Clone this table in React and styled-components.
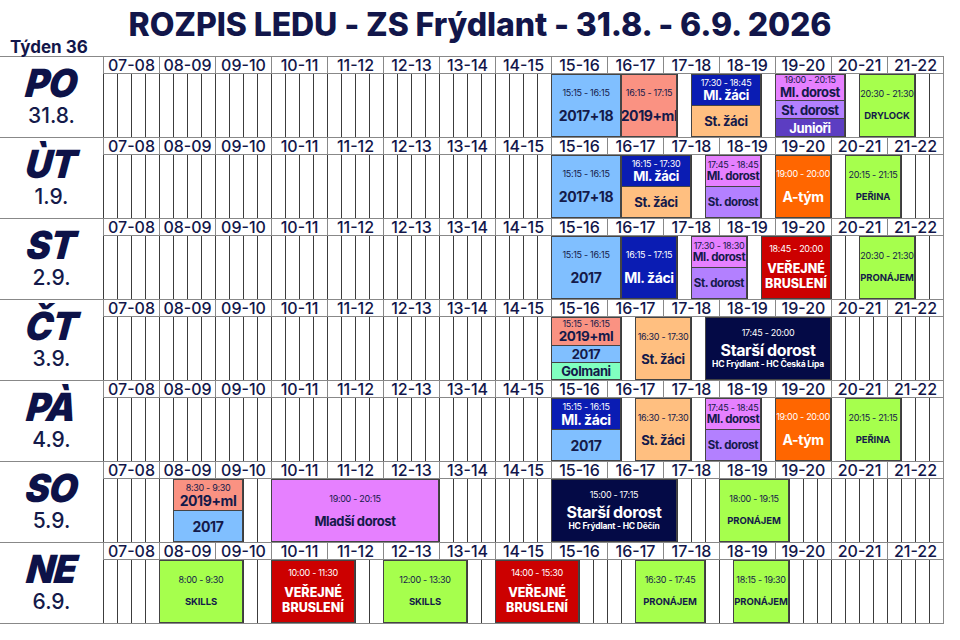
import React from 'react';
import styled, { createGlobalStyle } from 'styled-components';

const GlobalStyle = createGlobalStyle`
  * { box-sizing: border-box; }
  body {
    margin: 0;
    background: #ffffff;
    font-family: Inter, "Noto Sans", sans-serif;
    color: #141a4a;
  }
`;

const Page = styled.div`
  width: 960px;
  height: 640px;
  overflow: hidden;
`;

const Header = styled.header`
  display: flex;
  flex-direction: column;
  height: 56px;
`;

const Title = styled.h1`
  margin: 0;
  padding-top: 6px;
  line-height: 38px;
  font-size: 32px;
  font-weight: 800;
  text-align: center;
  color: #12164a;
  letter-spacing: -0.1px;
`;

const Week = styled.div`
  margin-top: -6px;
  padding-left: 10px;
  line-height: 18px;
  font-size: 17px;
  font-weight: 700;
  color: #12164a;
`;

const Board = styled.div`
  width: 944px;
  border-right: 1px solid #888;
  border-bottom: 1px solid #888;
`;

const Day = styled.section`
  display: grid;
  grid-template-columns: 103px repeat(15, 56px);
  grid-template-rows: 17px 63px;
  border-top: 1px solid #888;
`;

const DayLabel = styled.div`
  grid-row: 1 / span 2;
  grid-column: 1;
  display: flex;
  flex-direction: column;
  align-items: center;
  justify-content: center;
  gap: 3px;
  padding-bottom: 2px;
`;

const DayCode = styled.div`
  font-size: 37px;
  line-height: 36px;
  font-weight: 900;
  font-style: italic;
  letter-spacing: -1px;
  color: #0d1248;
  transform: skewX(-6deg) scaleY(1.05);
`;

const DayDate = styled.div`
  font-size: 21px;
  line-height: 24px;
  font-weight: 500;
  color: #141a4a;
`;

const HourCell = styled.div`
  border-left: 1px solid #888;
  border-bottom: 1px solid #888;
  font-size: 16px;
  line-height: 16px;
  font-weight: 500;
  text-align: center;
  color: #12164a;
`;

const Track = styled.div`
  grid-column: 2 / -1;
  grid-row: 2;
  display: grid;
  grid-template-columns: repeat(60, 14px);
  background-image: repeating-linear-gradient(
    to right,
    #3c3c3c 0 1px,
    transparent 1px 14px
  );
`;

const Block = styled.div`
  grid-row: 1;
  grid-column: ${(p) => p.$from + 1} / ${(p) => p.$to + 1};
  display: flex;
  flex-direction: column;
`;

const tones = {
  blue: ['#80bfff', '#141a4a'],
  salmon: ['#fa9282', '#141a4a'],
  navy: ['#0a1cb3', '#ffffff'],
  peach: ['#ffbf80', '#141a4a'],
  pink: ['#e680ff', '#141a4a'],
  lavender: ['#b380ff', '#141a4a'],
  purple: ['#5c3dc2', '#ffffff'],
  green: ['#a6ff4d', '#141a4a'],
  orange: ['#ff6600', '#ffffff'],
  red: ['#cc0000', '#ffffff'],
  dark: ['#040a46', '#ffffff'],
  mint: ['#80ffc0', '#141a4a'],
};

const Segment = styled.div`
  flex: ${(p) => p.$flex || 1} 1 0;
  min-height: 0;
  display: flex;
  flex-direction: column;
  align-items: center;
  justify-content: center;
  gap: ${(p) => p.$gap}px;
  background: ${(p) => tones[p.$tone][0]};
  color: ${(p) => tones[p.$tone][1]};
  border: 1px solid #444;
  & + & { border-top: none; }
  text-align: center;
  white-space: nowrap;
  overflow: hidden;
`;

const Time = styled.div`
  font-size: 9px;
  line-height: 10px;
  font-weight: 400;
  letter-spacing: -0.3px;
`;

const Name = styled.div`
  font-size: ${(p) => p.$size || 13}px;
  line-height: ${(p) => (p.$size || 13) + 1}px;
  font-weight: 700;
  letter-spacing: -0.4px;
`;

const Tag = styled.div`
  font-size: 9.5px;
  line-height: 12px;
  font-weight: 700;
  letter-spacing: -0.1px;
`;

const Public = styled.div`
  font-size: 12.5px;
  line-height: 15px;
  font-weight: 800;
`;

const Sub = styled.div`
  font-size: 8.5px;
  line-height: 11px;
  font-weight: 700;
  letter-spacing: -0.2px;
`;

const hours = [
  '07-08', '08-09', '09-10', '10-11', '11-12', '12-13', '13-14', '14-15',
  '15-16', '16-17', '17-18', '18-19', '19-20', '20-21', '21-22',
];

const one = (from, to, seg) => ({ from, to, segs: [seg] });

const days = [
  {
    code: 'PO',
    date: '31.8.',
    events: [
      one(32, 37, { tone: 'blue', time: '15:15 - 16:15', name: '2017+18', size: 14 }),
      one(37, 41, { tone: 'salmon', time: '16:15 - 17:15', name: '2019+ml', size: 14 }),
      {
        from: 42, to: 47, segs: [
          { tone: 'navy', time: '17:30 - 18:45', name: 'Ml. žáci' },
          { tone: 'peach', name: 'St. žáci' },
        ],
      },
      {
        from: 48, to: 53, segs: [
          { tone: 'pink', time: '19:00 - 20:15', name: 'Ml. dorost', flex: 27 },
          { tone: 'lavender', name: 'St. dorost', flex: 19 },
          { tone: 'purple', name: 'Junioři', flex: 18 },
        ],
      },
      one(54, 58, { tone: 'green', time: '20:30 - 21:30', tag: 'DRYLOCK' }),
    ],
  },
  {
    code: 'ÙT',
    date: '1.9.',
    events: [
      one(32, 37, { tone: 'blue', time: '15:15 - 16:15', name: '2017+18', size: 14 }),
      {
        from: 37, to: 42, segs: [
          { tone: 'navy', time: '16:15 - 17:30', name: 'Ml. žáci' },
          { tone: 'peach', name: 'St. žáci' },
        ],
      },
      {
        from: 43, to: 47, segs: [
          { tone: 'pink', time: '17:45 - 18:45', name: 'Ml. dorost', size: 11.5 },
          { tone: 'lavender', name: 'St. dorost', size: 11.5 },
        ],
      },
      one(48, 52, { tone: 'orange', time: '19:00 - 20:00', name: 'A-tým', size: 14 }),
      one(53, 57, { tone: 'green', time: '20:15 - 21:15', tag: 'PEŘINA' }),
    ],
  },
  {
    code: 'ST',
    date: '2.9.',
    events: [
      one(32, 37, { tone: 'blue', time: '15:15 - 16:15', name: '2017', size: 14 }),
      one(37, 41, { tone: 'navy', time: '16:15 - 17:15', name: 'Ml. žáci', size: 14 }),
      {
        from: 42, to: 46, segs: [
          { tone: 'pink', time: '17:30 - 18:30', name: 'Ml. dorost', size: 11.5 },
          { tone: 'lavender', name: 'St. dorost', size: 11.5 },
        ],
      },
      one(47, 52, { tone: 'red', time: '18:45 - 20:00', public: true }),
      one(54, 58, { tone: 'green', time: '20:30 - 21:30', tag: 'PRONÁJEM' }),
    ],
  },
  {
    code: 'ČT',
    date: '3.9.',
    events: [
      {
        from: 32, to: 37, segs: [
          { tone: 'salmon', time: '15:15 - 16:15', name: '2019+ml', size: 13.5, flex: 29 },
          { tone: 'blue', name: '2017', flex: 18 },
          { tone: 'mint', name: 'Golmani', flex: 17 },
        ],
      },
      one(38, 42, { tone: 'peach', time: '16:30 - 17:30', name: 'St. žáci' }),
      one(43, 52, {
        tone: 'dark', time: '17:45 - 20:00', match: 'Starší dorost',
        sub: 'HC Frýdlant - HC Česká Lípa',
      }),
    ],
  },
  {
    code: 'PÀ',
    date: '4.9.',
    events: [
      {
        from: 32, to: 37, segs: [
          { tone: 'navy', time: '15:15 - 16:15', name: 'Ml. žáci', size: 14 },
          { tone: 'blue', name: '2017', size: 14 },
        ],
      },
      one(38, 42, { tone: 'peach', time: '16:30 - 17:30', name: 'St. žáci' }),
      {
        from: 43, to: 47, segs: [
          { tone: 'pink', time: '17:45 - 18:45', name: 'Ml. dorost', size: 11.5 },
          { tone: 'lavender', name: 'St. dorost', size: 11.5 },
        ],
      },
      one(48, 52, { tone: 'orange', time: '19:00 - 20:00', name: 'A-tým', size: 14 }),
      one(53, 57, { tone: 'green', time: '20:15 - 21:15', tag: 'PEŘINA' }),
    ],
  },
  {
    code: 'SO',
    date: '5.9.',
    events: [
      {
        from: 5, to: 10, segs: [
          { tone: 'salmon', time: '8:30 - 9:30', name: '2019+ml', size: 14 },
          { tone: 'blue', name: '2017', size: 14 },
        ],
      },
      one(12, 24, { tone: 'pink', time: '19:00 - 20:15', name: 'Mladší dorost' }),
      one(32, 41, {
        tone: 'dark', time: '15:00 - 17:15', match: 'Starší dorost',
        sub: 'HC Frýdlant - HC Děčín',
      }),
      one(44, 49, { tone: 'green', time: '18:00 - 19:15', tag: 'PRONÁJEM' }),
    ],
  },
  {
    code: 'NE',
    date: '6.9.',
    events: [
      one(4, 10, { tone: 'green', time: '8:00 - 9:30', tag: 'SKILLS' }),
      one(12, 18, { tone: 'red', time: '10:00 - 11:30', public: true }),
      one(20, 26, { tone: 'green', time: '12:00 - 13:30', tag: 'SKILLS' }),
      one(28, 34, { tone: 'red', time: '14:00 - 15:30', public: true }),
      one(38, 43, { tone: 'green', time: '16:30 - 17:45', tag: 'PRONÁJEM' }),
      one(45, 49, { tone: 'green', time: '18:15 - 19:30', tag: 'PRONÁJEM' }),
    ],
  },
];

function segmentGap(seg, stacked) {
  if (stacked) return 0;
  if (seg.match) return 4;
  if (seg.public) return 7;
  if (seg.tag) return 11;
  return 10;
}

function SegmentBody({ seg }) {
  return (
    <>
      {seg.time && <Time>{seg.time}</Time>}
      {seg.name && <Name $size={seg.size}>{seg.name}</Name>}
      {seg.tag && <Tag>{seg.tag}</Tag>}
      {seg.public && (
        <Public>
          VEŘEJNÉ
          <br />
          BRUSLENÍ
        </Public>
      )}
      {seg.match && (
        <div>
          <Name $size={16}>{seg.match}</Name>
          <Sub>{seg.sub}</Sub>
        </div>
      )}
    </>
  );
}

function App() {
  return (
    <Page>
      <GlobalStyle />
      <Header>
        <Title>ROZPIS LEDU - ZS Frýdlant - 31.8. - 6.9. 2026</Title>
        <Week>Týden 36</Week>
      </Header>
      <Board>
        {days.map((day) => (
          <Day key={day.code}>
            <DayLabel>
              <DayCode>{day.code}</DayCode>
              <DayDate>{day.date}</DayDate>
            </DayLabel>
            {hours.map((h) => (
              <HourCell key={h}>{h}</HourCell>
            ))}
            <Track>
              {day.events.map((ev) => (
                <Block key={ev.from} $from={ev.from} $to={ev.to}>
                  {ev.segs.map((seg, i) => (
                    <Segment
                      key={i}
                      $tone={seg.tone}
                      $flex={seg.flex}
                      $gap={segmentGap(seg, ev.segs.length > 1)}
                    >
                      <SegmentBody seg={seg} />
                    </Segment>
                  ))}
                </Block>
              ))}
            </Track>
          </Day>
        ))}
      </Board>
    </Page>
  );
}

export default App;
